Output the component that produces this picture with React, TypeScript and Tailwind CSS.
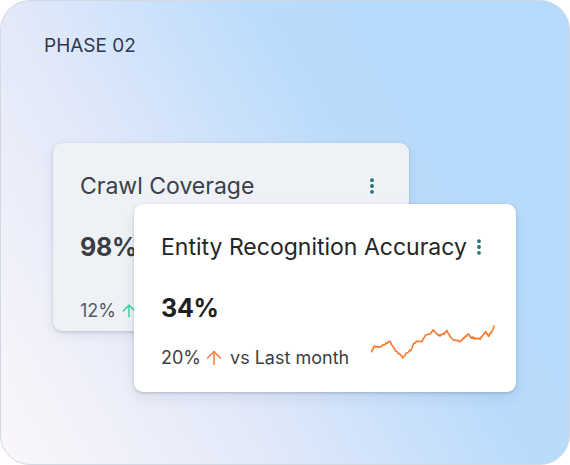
import { ArrowUp, EllipsisVertical } from "lucide-react";

// rough shape of the trend line, filled in with small jitter below
const trendKeys: [number, number][] = [
  [1.7, 28.7], [4, 23.7], [10, 23.7], [16.7, 20.3], [19.3, 17.7], [23.3, 23.7],
  [26.7, 28.7], [32.7, 34.3], [36.7, 30.3], [41.7, 26.3], [44, 19.7], [46.7, 18.7],
  [51.7, 18.7], [56, 11.3], [59.3, 11.3], [63.3, 7], [66, 10.3], [70, 12.7],
  [73.3, 11.3], [76.7, 8], [80, 13], [85, 17.7], [90, 18.7], [93.3, 15.3],
  [98.3, 11.3], [101.7, 14.7], [106, 15.3], [110, 16.3], [113.3, 11.3], [116, 9.3],
  [118.3, 13], [121.7, 8.7], [124, 3],
];

function buildTrend() {
  let seed = 7;
  const rand = () => {
    seed = (seed * 16807) % 2147483647;
    return seed / 2147483647;
  };
  const pts: string[] = [];
  for (let i = 0; i < trendKeys.length - 1; i++) {
    const [x0, y0] = trendKeys[i];
    const [x1, y1] = trendKeys[i + 1];
    const steps = Math.max(1, Math.round((x1 - x0) / 0.8));
    for (let s = 0; s < steps; s++) {
      const t = s / steps;
      const jitter = i === 0 && s === 0 ? 0 : (rand() - 0.5) * 1.8;
      pts.push(`${(x0 + (x1 - x0) * t).toFixed(2)},${(y0 + (y1 - y0) * t + jitter).toFixed(2)}`);
    }
  }
  const last = trendKeys[trendKeys.length - 1];
  pts.push(`${last[0]},${last[1]}`);
  return pts.join(" ");
}

const trend = buildTrend();

function MenuDots() {
  return <EllipsisVertical size={20} strokeWidth={2.6} className="shrink-0 text-[#1d6f72]" />;
}

export default function App() {
  return (
    <div className="w-[570px] h-[465px] overflow-hidden rounded-[30px] border border-[#d3d9e2] bg-[linear-gradient(60deg,#fbf7fa_0%,#e3e9f9_32%,#b9dbfc_64%,#b4dbfd_100%)] font-['Inter',sans-serif]">
      <div className="ml-[43px] mt-[33px] text-[19px] leading-[24px] text-[#2c3a51]">PHASE 02</div>

      <div className="relative ml-[52px] mt-[85px]">
        {/* card behind */}
        <div className="w-[356px] h-[188px] overflow-hidden rounded-[9px] bg-[#eef1f6] shadow-[0_1px_3px_rgba(30,40,60,0.18),0_4px_12px_rgba(30,40,60,0.08)] px-[27px] pt-[29px]">
          <div className="flex items-center justify-between">
            <span className="text-[23px] leading-[28px] text-[#3b4047]">Crawl Coverage</span>
            <MenuDots />
          </div>
          <div className="mt-[31px] text-[25px] leading-[32px] font-bold tracking-[-0.01em] text-[#3a3d42]">98%</div>
          <div className="mt-[36px] flex items-center text-[18px] leading-[24px] text-[#55595f]">
            <span>12%</span>
            <ArrowUp size={20} strokeWidth={1.7} className="ml-[3px] text-[#35d0a0]" />
          </div>
        </div>

        {/* card in front */}
        <div className="absolute left-[81px] top-[61px] w-[382px] h-[188px] rounded-[9px] bg-white shadow-[0_1px_3px_rgba(30,40,60,0.22),0_6px_14px_rgba(30,40,60,0.08)] px-[27px] pt-[29px]">
          <div className="flex items-center justify-between">
            <span className="text-[23px] leading-[28px] whitespace-nowrap text-[#242526]">Entity Recognition Accuracy</span>
            <MenuDots />
          </div>
          <div className="mt-[31px] flex items-end justify-between">
            <div className="flex flex-col gap-[22px]">
              <div className="text-[25px] leading-[32px] font-bold tracking-[-0.01em] text-[#1f2022]">34%</div>
              <div className="flex items-center text-[18px] leading-[24px] text-[#3e3f42]">
                <span>20%</span>
                <ArrowUp size={22} strokeWidth={1.6} className="ml-[2px] text-[#f47a3a]" />
                <span className="ml-[5px]">vs Last month</span>
              </div>
            </div>
            <svg width="126" height="38" viewBox="0 0 126 38" className="mb-[9px] -mr-[7px]">
              <polyline points={trend} fill="none" stroke="#f57a2e" strokeWidth="1.6" strokeLinejoin="round" strokeLinecap="round" />
            </svg>
          </div>
        </div>
      </div>
    </div>
  );
}
